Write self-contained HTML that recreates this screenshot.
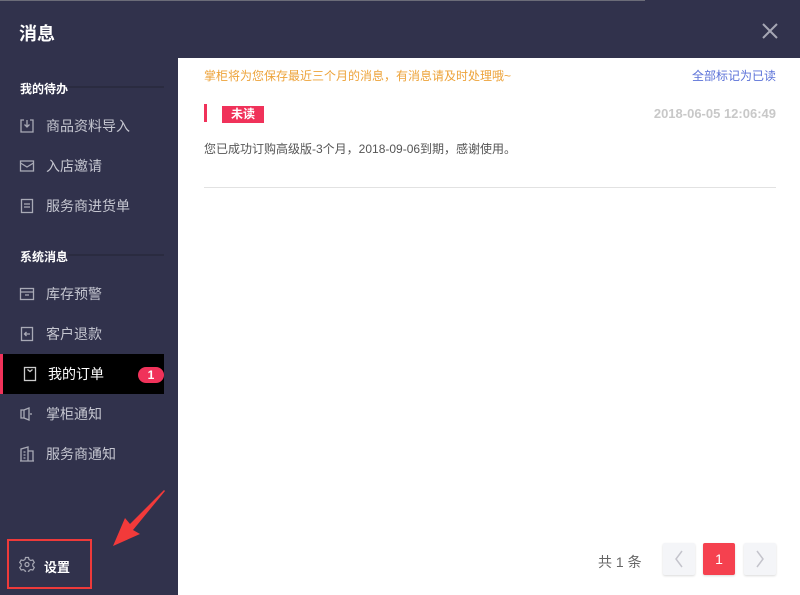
<!DOCTYPE html>
<html><head><meta charset="utf-8"><style>
*{margin:0;padding:0;box-sizing:border-box}
body{width:800px;height:595px;background:#31324c;font-family:"Liberation Sans","Noto Sans CJK SC",sans-serif;position:relative;overflow:hidden}
.top{position:absolute;left:0;top:0;width:645px;height:1px;background:#6b6c78}
.title{position:absolute;left:19px;top:20px;color:#fff;font-size:18px;font-weight:bold}
.close{position:absolute;left:760px;top:21px;width:20px;height:20px}
.sec{position:absolute;left:20px;color:#fff;font-size:12px;font-weight:bold}
.secline{position:absolute;left:68px;width:96px;height:2px;background:#2a2b40}
.item{position:absolute;left:0;width:164px;height:40px;color:#c5c6d0;font-size:14px;line-height:40px;padding-left:46px}
.item svg{position:absolute;left:19px;top:12px}
.active{background:#000;color:#fff;border-left:3px solid #f0325a;padding-left:45px}
.active svg{left:19px}
.badge{position:absolute;left:135px;top:13px;width:26px;height:16px;border-radius:8px;background:#f0325a;color:#fff;font-size:12px;font-weight:bold;line-height:16px;text-align:center}
.main{position:absolute;left:178px;top:58px;width:622px;height:537px;background:#fff}
.tip{position:absolute;left:26px;top:9px;font-size:12px;color:#eda33a}
.all{position:absolute;right:24px;top:9px;font-size:12px;color:#5b72d8}
.bar{position:absolute;left:26px;top:46px;width:3px;height:18px;background:#f0325a}
.tag{position:absolute;left:44px;top:48px;width:42px;height:17px;background:#f0325a;color:#fff;font-size:12px;font-weight:bold;text-align:center;line-height:17px}
.date{position:absolute;right:24px;top:48px;font-size:13px;font-weight:bold;color:#c8c8c8}
.msg{position:absolute;left:26px;top:82px;font-size:12px;color:#555}
.hr{position:absolute;left:26px;top:129px;width:572px;height:1px;background:#e2e2e2}
.total{position:absolute;left:420px;top:494px;font-size:14px;color:#666}
.pg{position:absolute;top:485px;width:32px;height:32px;border-radius:2px;background:#f4f5f8;box-shadow:0 1px 2px rgba(0,0,0,.15);color:#bbb;text-align:center;line-height:32px;font-size:16px}
.pg svg{position:absolute;left:10px;top:7px}
.red{border:2px solid #ee3a3a;position:absolute;left:7px;top:539px;width:85px;height:50px}
</style></head><body>
<div class="top"></div>
<div class="title">消息</div>
<svg class="close" viewBox="0 0 20 20"><path d="M3 3L17 17M17 3L3 17" stroke="#a5a6b4" stroke-width="2"/></svg>
<div class="sec" style="top:80px">我的待办</div><div class="secline" style="top:86px"></div>
<div class="item" style="top:106px"><svg width="16" height="16" viewBox="0 0 16 16" fill="none" stroke="#a9aab6" stroke-width="1.3"><path d="M5 2H2v12h12V2h-3M8 2v7M5.5 6.5L8 9l2.5-2.5"/></svg>商品资料导入</div>
<div class="item" style="top:146px"><svg width="16" height="16" viewBox="0 0 16 16" fill="none" stroke="#a9aab6" stroke-width="1.3"><rect x="1.5" y="3" width="13" height="10"/><path d="M1.5 5l6.5 4 6.5-4"/></svg>入店邀请</div>
<div class="item" style="top:186px"><svg width="16" height="16" viewBox="0 0 16 16" fill="none" stroke="#a9aab6" stroke-width="1.3"><rect x="2.5" y="1.5" width="11" height="13"/><path d="M5 6h6M5 9h6"/></svg>服务商进货单</div>
<div class="sec" style="top:248px">系统消息</div><div class="secline" style="top:254px"></div>
<div class="item" style="top:274px"><svg width="16" height="16" viewBox="0 0 16 16" fill="none" stroke="#a9aab6" stroke-width="1.3"><rect x="1.5" y="2.5" width="13" height="11"/><path d="M1.5 6h13M6 9h4"/></svg>库存预警</div>
<div class="item" style="top:314px"><svg width="16" height="16" viewBox="0 0 16 16" fill="none" stroke="#a9aab6" stroke-width="1.3"><rect x="2.5" y="1.5" width="11" height="13"/><path d="M11 8H5.5M7.5 6L5.5 8l2 2"/></svg>客户退款</div>
<div class="item active" style="top:354px"><svg width="16" height="16" viewBox="0 0 16 16" fill="none" stroke="#ccc" stroke-width="1.3"><rect x="2.5" y="1.5" width="11" height="13"/><path d="M5.5 3.5l2.5 2 2.5-2"/></svg>我的订单<span class="badge">1</span></div>
<div class="item" style="top:394px"><svg width="16" height="16" viewBox="0 0 16 16" fill="none" stroke="#a9aab6" stroke-width="1.3"><path d="M2 4h3v8H2zM5 4l5-2v12l-5-2M12 7v2"/></svg>掌柜通知</div>
<div class="item" style="top:434px"><svg width="16" height="16" viewBox="0 0 16 16" fill="none" stroke="#a9aab6" stroke-width="1.3"><path d="M2 15V3l7-2v14M9 5h5v10M1 15h14M4.5 6h2M4.5 9h2M4.5 12h2"/></svg>服务商通知</div>
<svg style="position:absolute;left:108px;top:488px" width="62" height="62"><path d="M57 3L25 42l7 4L5 58l12-28 5 6L56 2z" fill="#f23a3a"/></svg>
<div class="red"></div>
<svg style="position:absolute;left:19px;top:556px" width="16" height="16" viewBox="0 0 16 16" fill="none" stroke="#a9aab6" stroke-width="1.2"><path d="M6.5 1.5h3l.5 2 1.8 1 2-.6 1.5 2.6-1.5 1.5v2l1.5 1.5-1.5 2.6-2-.6-1.8 1-.5 2h-3l-.5-2-1.8-1-2 .6L.7 11.5 2.2 10V8L.7 6.5 2.2 3.9l2 .6 1.8-1z"/><circle cx="8" cy="8.5" r="2"/></svg>
<div style="position:absolute;left:44px;top:557px;color:#fff;font-size:13px;font-weight:bold">设置</div>
<div class="main">
<div class="tip">掌柜将为您保存最近三个月的消息，有消息请及时处理哦~</div>
<div class="all">全部标记为已读</div>
<div class="bar"></div><div class="tag">未读</div>
<div class="date">2018-06-05 12:06:49</div>
<div class="msg">您已成功订购高级版-3个月，2018-09-06到期，感谢使用。</div>
<div class="hr"></div>
<div class="total">共 1 条</div>
<div class="pg" style="left:485px"><svg width="12" height="18" viewBox="0 0 12 18"><path d="M9 1L3 9l6 8" fill="none" stroke="#c4c4cc" stroke-width="1.5"/></svg></div>
<div class="pg" style="left:525px;background:#f5414f;color:#fff;font-size:14px">1</div>
<div class="pg" style="left:566px"><svg width="12" height="18" viewBox="0 0 12 18"><path d="M3 1l6 8-6 8" fill="none" stroke="#c4c4cc" stroke-width="1.5"/></svg></div>
</div>
</body></html>
